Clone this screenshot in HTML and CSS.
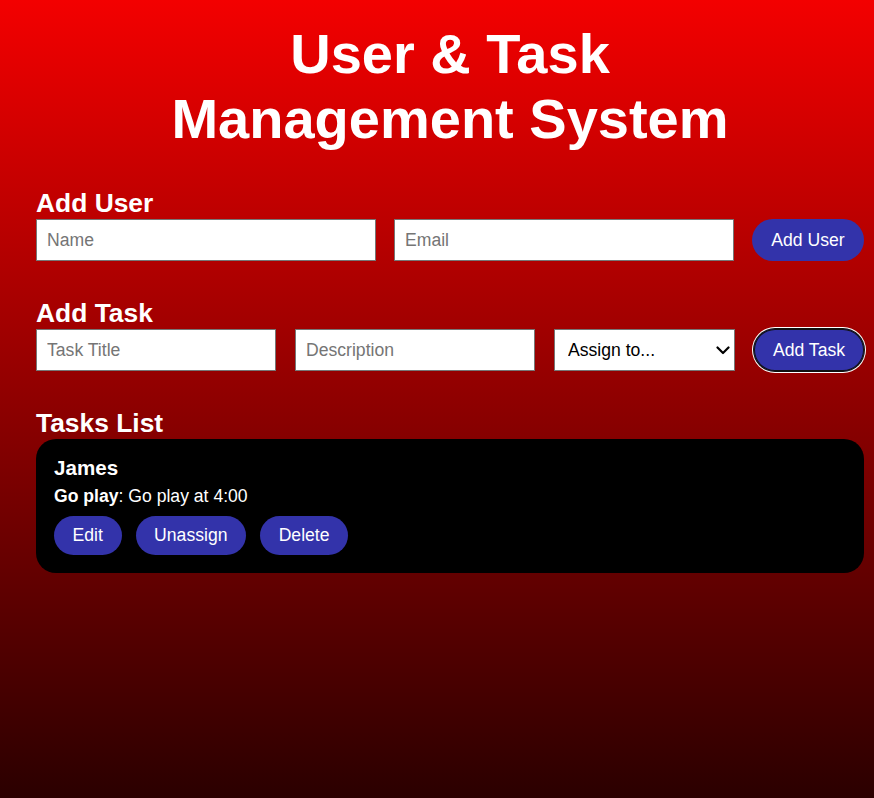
FILE: index.html
```html
<!DOCTYPE html>
<html lang="en">
<head>
<meta charset="utf-8">
<title>User &amp; Task Management System</title>
<link rel="stylesheet" href="styles.css">
</head>
<body class="page">
<div class="app">
  <h1 class="title">User &amp; Task Management System</h1>

  <section class="section">
    <h2 class="section-title">Add User</h2>
    <div class="form-row form-row--user">
      <input class="field" type="text" placeholder="Name">
      <input class="field" type="email" placeholder="Email">
      <button class="btn btn--form btn--user">Add User</button>
    </div>
  </section>

  <section class="section">
    <h2 class="section-title">Add Task</h2>
    <div class="form-row form-row--task">
      <input class="field" type="text" placeholder="Task Title">
      <input class="field" type="text" placeholder="Description">
      <div class="picker-wrap">
        <select class="picker">
          <option>Assign to...</option>
          <option>James</option>
        </select>
        <svg class="picker-arrow" width="14" height="9" viewBox="0 0 14 9" aria-hidden="true">
          <path d="M1.5 1.5 L7 7 L12.5 1.5" fill="none" stroke="#000" stroke-width="2.2" stroke-linecap="round" stroke-linejoin="round"/>
        </svg>
      </div>
      <button class="btn btn--form btn--task btn--focused">Add Task</button>
    </div>
  </section>

  <section class="section">
    <h2 class="section-title">Tasks List</h2>
    <div class="task-card">
      <h3 class="task-user">James</h3>
      <p class="task-text"><strong>Go play</strong>: Go play at 4:00</p>
      <div class="task-actions">
        <button class="btn btn--small">Edit</button>
        <button class="btn btn--small">Unassign</button>
        <button class="btn btn--small">Delete</button>
      </div>
    </div>
  </section>
</div>
</body>
</html>
```

FILE: styles.css
```css
.page {
  margin: 0;
  font-family: "Liberation Sans", Arial, sans-serif;
  font-size: 17.6px;
  color: #fff;
}

.app {
  box-sizing: border-box;
  min-height: 100vh;
  padding: 22.4px 10px 20px 36px;
  background: linear-gradient(to bottom, #f30000 0%, #2b0000 100%);
}

.title {
  max-width: 600px;
  margin: 0 auto;
  font-size: 56px;
  line-height: 64.4px;
  font-weight: bold;
  text-align: center;
}

.section {
  margin-top: 36.6px;
}

.section-title {
  margin: 0 0 1px;
  font-size: 26.4px;
  line-height: 30.4px;
  font-weight: bold;
}

.form-row {
  display: flex;
  align-items: stretch;
  height: 42px;
}

.form-row--user {
  gap: 18px;
}

.form-row--task {
  gap: 19px;
}

.field {
  flex: 1 1 0;
  min-width: 0;
  box-sizing: border-box;
  height: 42px;
  padding: 0 10px;
  border: 1px solid #767676;
  border-radius: 0;
  background: #fff;
  font-family: "Liberation Sans", Arial, sans-serif;
  font-size: 17.6px;
  color: #000;
}

.field::placeholder {
  color: #757575;
}

.picker-wrap {
  position: relative;
  flex: 0 0 181px;
}

.picker {
  -webkit-appearance: none;
  appearance: none;
  box-sizing: border-box;
  width: 100%;
  height: 42px;
  padding: 0 28px 0 13px;
  border: 1px solid #767676;
  border-radius: 0;
  background-color: #fff;
  font-family: "Liberation Sans", Arial, sans-serif;
  font-size: 17.6px;
  color: #000;
}

.picker-arrow {
  position: absolute;
  right: 5px;
  top: 17px;
  pointer-events: none;
}

.btn {
  border: none;
  border-radius: 999px;
  background: #3333aa;
  color: #fff;
  font-family: "Liberation Sans", Arial, sans-serif;
  font-size: 17.6px;
  cursor: pointer;
}

.btn--user {
  flex: 0 0 112px;
  padding: 0;
}

.btn--task {
  flex: 0 0 110px;
  padding: 0;
}

.btn--focused {
  box-shadow: inset 0 0 0 1px #111, 0 0 0 1px #111, 0 0 0 2px #fff;
}

.task-card {
  background: #000;
  border-radius: 20px;
  padding: 17px 18px 18px;
}

.task-user {
  margin: 0;
  font-size: 20.6px;
  line-height: 23.7px;
  font-weight: bold;
}

.task-text {
  margin: 5.8px 0 0;
  line-height: 20.2px;
}

.task-actions {
  display: flex;
  gap: 14px;
  margin-top: 10.2px;
}

.btn--small {
  height: 39px;
  padding: 0 18.6px;
}
```
